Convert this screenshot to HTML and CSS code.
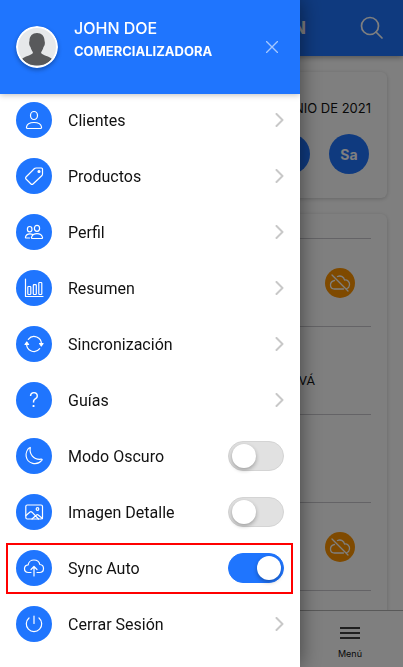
FILE: index.html
```html
<!DOCTYPE html>
<html lang="es">
<head>
<meta charset="utf-8">
<meta name="viewport" content="width=device-width, initial-scale=1">
<title>Menú</title>
<link rel="stylesheet" href="styles.css">
</head>
<body>
<div class="app">
  <header class="navbar">
    <h1 class="navbar-title">N</h1>
    <button class="icon-button" type="button" aria-label="Buscar">
      <svg width="24" height="24" viewBox="0 0 24 24"><circle cx="10" cy="10" r="8.500"/><path d="M16 16l6 6"/></svg>
    </button>
  </header>
  <main class="content">
    <section class="card calendar">
      <p class="month">JUNIO DE 2021</p>
      <div class="days"><button class="day" type="button" aria-label="Viernes"></button><button class="day" type="button">Sa</button></div>
    </section>
    <section class="card visits">
      <div class="visit visit-first"></div>
      <div class="visit"><span class="badge"><svg width="30" height="30" viewBox="0 0 30 30"><path d="M9.500 12.500C7 13 5.500 14.500 5.500 17C5.500 19.500 7.200 21 9.500 21H18.500M12.500 8.500C16 7 19 9.200 19.500 12C22.500 11.700 25 14 24.500 17C24.300 18.700 23.300 20 22 20.500M7 7l16 16"/></svg></span></div>
      <div class="visit"><p class="place">VÁ</p></div>
      <div class="visit"></div>
      <div class="visit"><span class="badge"><svg width="30" height="30" viewBox="0 0 30 30"><path d="M9.500 12.500C7 13 5.500 14.500 5.500 17C5.500 19.500 7.200 21 9.500 21H18.500M12.500 8.500C16 7 19 9.200 19.500 12C22.500 11.700 25 14 24.500 17C24.300 18.700 23.300 20 22 20.500M7 7l16 16"/></svg></span></div>
    </section>
  </main>
  <nav class="tabbar">
    <button class="tab" type="button">
      <svg width="20" height="14" viewBox="0 0 20 14"><path d="M0 2h20M0 7h20M0 12h20"/></svg>
      <span>Menú</span>
    </button>
  </nav>
</div>
<div class="backdrop"></div>
<aside class="drawer">
  <header class="profile">
    <svg class="avatar" width="42" height="42" viewBox="0 0 42 42">
      <circle cx="21" cy="21" r="20" fill="#e6e8ea"/>
      <path fill="#58595b" d="M21 7C25.500 7 28.500 10 28.500 14.500C29.500 17.500 28.500 20 27.500 21C27 23.500 25.500 25 25 27C28 30 33 30 36 33C32 37.500 27 39.500 21 39.500S10 37.500 6 33C9 30 14 30 17 27C16.500 25 15 23.500 14.500 21C13.500 20 12.500 17.500 13.500 14.500C13.500 10 16.500 7 21 7Z"/>
      <circle cx="21" cy="21" r="20" fill="none" stroke="#fff" stroke-width="2"/>
    </svg>
    <div class="identity">
      <p class="name">JOHN DOE</p>
      <p class="company">COMERCIALIZADORA</p>
    </div>
    <button class="close" type="button" aria-label="Cerrar menú"><svg width="12" height="12" viewBox="0 0 12 12"><path d="M0.500 0.500l11 11M11.500 0.500l-11 11"/></svg></button>
  </header>
  <ul class="menu">
    <li><a class="row" href="#clientes">
      <svg class="icon" width="36" height="36" viewBox="0 0 36 36"><ellipse cx="18" cy="13.500" rx="3.500" ry="4"/><path d="M12 26.500C10.800 26.500 10.300 26 10.500 25C11 22 14 20.500 18 20.500S25 22 25.500 25C25.700 26 25.200 26.500 24 26.500Z"/></svg>
      <span class="label">Clientes</span><svg class="chevron" width="9" height="14" viewBox="0 0 9 14"><path d="M1.500 1l6 6-6 6"/></svg></a></li>
    <li><a class="row" href="#productos">
      <svg class="icon" width="36" height="36" viewBox="0 0 36 36"><path d="M10 19L18.500 10.500C19 10 19.500 10 20 10H25.500Q26.500 10 26.500 11V16C26.500 16.700 26.300 17 26 17.500L17 26Q16 27 15 26L10 21Q9 20 10 19Z"/><circle cx="23" cy="13.500" r="1" fill="#fff"/></svg>
      <span class="label">Productos</span><svg class="chevron" width="9" height="14" viewBox="0 0 9 14"><path d="M1.500 1l6 6-6 6"/></svg></a></li>
    <li><a class="row" href="#perfil">
      <svg class="icon" width="36" height="36" viewBox="0 0 36 36"><ellipse cx="21" cy="14.300" rx="2.600" ry="3"/><ellipse cx="13.700" cy="15.200" rx="2.300" ry="2.700"/><path d="M16.500 24.500Q15.200 24.500 15.500 23.300C16.200 21 18.200 19.600 21 19.600S25.800 21 26.500 23.300Q26.800 24.500 25.500 24.500ZM16.500 20.300C13 19.500 10.200 20.600 9.500 23Q9.200 24 10.200 24H13.500"/></svg>
      <span class="label">Perfil</span><svg class="chevron" width="9" height="14" viewBox="0 0 9 14"><path d="M1.500 1l6 6-6 6"/></svg></a></li>
    <li><a class="row" href="#resumen">
      <svg class="icon" width="36" height="36" viewBox="0 0 36 36"><path d="M9.500 9V26.500H27"/><rect x="11.800" y="16.500" width="3" height="8" rx=".7"/><rect x="17.300" y="14.700" width="3" height="9.800" rx=".7"/><rect x="22.800" y="12.500" width="3" height="12" rx=".7"/></svg>
      <span class="label">Resumen</span><svg class="chevron" width="9" height="14" viewBox="0 0 9 14"><path d="M1.500 1l6 6-6 6"/></svg></a></li>
    <li><a class="row" href="#sincronizacion">
      <svg class="icon" width="36" height="36" viewBox="0 0 36 36"><path d="M12.300 13.300A7.300 7.300 0 0 1 25.300 18.500M23.700 22.700A7.300 7.300 0 0 1 10.700 17.500"/><path d="M9 18.500l1.800-2.500 1.800 2.500zM23.500 17.500h3.600l-1.800 2.500z" fill="#fff"/></svg>
      <span class="label">Sincronización</span><svg class="chevron" width="9" height="14" viewBox="0 0 9 14"><path d="M1.500 1l6 6-6 6"/></svg></a></li>
    <li><a class="row" href="#guias">
      <span class="icon icon-help" aria-hidden="true">?</span>
      <span class="label">Guías</span><svg class="chevron" width="9" height="14" viewBox="0 0 9 14"><path d="M1.500 1l6 6-6 6"/></svg></a></li>
    <li><label class="row">
      <svg class="icon" width="36" height="36" viewBox="0 0 36 36"><path d="M14.300 9.700C13 16 17.500 22 25 21.200Q26.800 21 25.800 22.300C21 28 11.500 26 10.200 18.500C9.600 15 11.300 11.300 13.500 9.800Q14.400 9.200 14.300 9.700Z"/></svg>
      <span class="label">Modo Oscuro</span><input class="toggle" type="checkbox" role="switch"></label></li>
    <li><label class="row">
      <svg class="icon" width="36" height="36" viewBox="0 0 36 36"><rect x="9.800" y="11" width="16.700" height="14" rx="1.500"/><circle cx="21.500" cy="15" r="1.300"/><path d="M10 21.500l4-3.500Q15 17.300 16 18.200L22.500 25M16 25l4.500-4Q21.300 20.300 22.200 21L26.500 24.500"/></svg>
      <span class="label">Imagen Detalle</span><input class="toggle" type="checkbox" role="switch"></label></li>
    <li><label class="row highlighted">
      <svg class="icon" width="36" height="36" viewBox="0 0 36 36"><path d="M15 22.500H12.500C10 22.500 8.500 21 8.500 18.800C8.500 16.500 10 15 12.200 14.800C12.500 12 15 10 18 10C20.800 10 23.300 11.900 23.800 14.500C26 14.700 27.500 16.300 27.500 18.500C27.500 20.800 26 22.500 23.500 22.500H21M18 26V17M15 19.500l3-3 3 3"/></svg>
      <span class="label">Sync Auto</span><input class="toggle" type="checkbox" role="switch" checked></label></li>
    <li><a class="row" href="#salir">
      <svg class="icon" width="36" height="36" viewBox="0 0 36 36"><path d="M18 10V17.500M13 12A7.700 7.700 0 1 0 23 12"/></svg>
      <span class="label">Cerrar Sesión</span><svg class="chevron" width="9" height="14" viewBox="0 0 9 14"><path d="M1.500 1l6 6-6 6"/></svg></a></li>
  </ul>
</aside>
</body>
</html>
```
FILE: styles.css
```css
:root {
  --blue: #1f75fe;
  --line: #c8c7cc;
}

* { box-sizing: border-box; }

body, p, h1, ul {
  margin: 0;
  padding: 0;
}

body {
  font-family: Inter, "Liberation Sans", sans-serif;
  font-size: 16px;
  color: #111;
}

button {
  border: 0;
  padding: 0;
  background: none;
  font: inherit;
  color: inherit;
}

svg {
  display: block;
  flex: none;
  fill: none;
  stroke-linecap: round;
  stroke-linejoin: round;
}

.app {
  height: 100vh;
  display: flex;
  flex-direction: column;
  overflow: hidden;
  background: #fff;
}

.navbar {
  position: relative;
  flex: none;
  height: 56px;
  padding: 0 19px;
  display: flex;
  align-items: center;
  justify-content: flex-end;
  gap: 54px;
  background: var(--blue);
  color: #fff;
  box-shadow: 0 1px 6px rgba(0, 0, 0, .4);
}

.navbar-title {
  font-size: 17px;
  font-weight: 700;
}

.icon-button svg {
  stroke: #fff;
  stroke-width: 1.7;
}

.content {
  flex: 1;
  min-height: 0;
  overflow: hidden;
  padding: 16px;
  display: flex;
  flex-direction: column;
  gap: 16px;
}

.card {
  flex: none;
  padding: 0 16px;
  border-radius: 6px;
  box-shadow: 0 1px 4px rgba(0, 0, 0, .2);
}

.calendar {
  padding: 26px 16px 24px;
  text-align: right;
}

.month {
  font-size: 13px;
  line-height: 20px;
}

.days {
  display: flex;
  justify-content: flex-end;
  gap: 19px;
  padding: 16px 2px 0 0;
}

.day {
  width: 40px;
  height: 40px;
  border-radius: 50%;
  background: var(--blue);
  color: #fff;
  font-size: 14px;
  font-weight: 700;
}

.visits { padding-bottom: 32px; }

.visit {
  height: 88px;
  display: flex;
  align-items: center;
  justify-content: flex-end;
  padding-right: 16px;
  border-bottom: 1px solid var(--line);
}

.visit-first { height: 25px; }

.badge svg {
  border-radius: 50%;
  background: #ff9500;
  stroke: #fff;
  stroke-width: 1.3;
}

.place {
  padding: 20px 40px 0 0;
  font-family: Roboto, sans-serif;
  font-size: 13px;
}

.tabbar {
  flex: none;
  height: 57px;
  padding: 8px 16px 0;
  display: flex;
  justify-content: flex-end;
  border-top: 1px solid #b2b2b2;
  background: #fff;
}

.tab {
  width: 74px;
  display: flex;
  flex-direction: column;
  align-items: center;
  justify-content: center;
  gap: 8px;
  font-size: 9px;
  line-height: 12px;
}

.tab svg {
  stroke: #000;
  stroke-width: 1.5;
  stroke-linecap: butt;
}

.backdrop {
  position: fixed;
  inset: 0;
  background: rgba(0, 0, 0, .5);
}

.drawer {
  position: fixed;
  inset: 0 auto 0 0;
  width: 300px;
  max-width: 100%;
  overflow: hidden auto;
  background: #fff;
  box-shadow: 0 0 20px rgba(0, 0, 0, .5);
}

.profile {
  position: relative;
  height: 94px;
  padding: 0 22px 0 16px;
  display: flex;
  align-items: center;
  gap: 16px;
  background: var(--blue);
  color: #fff;
  box-shadow: 0 1px 6px rgba(0, 0, 0, .25);
}

.avatar {
  border-radius: 50%;
  box-shadow: 0 2px 4px rgba(0, 0, 0, .3);
}

.identity {
  flex: 1;
  padding-bottom: 16px;
}

.name {
  font-size: 16px;
  font-weight: 500;
  line-height: 24px;
}

.company {
  font-size: 13px;
  font-weight: 700;
  line-height: 22px;
}

.close svg {
  stroke: #a5c8ff;
  stroke-width: 1.4;
}

.menu {
  margin-top: -2px;
  list-style: none;
}

.row {
  position: relative;
  height: 56px;
  padding: 0 16px;
  display: flex;
  align-items: center;
  gap: 16px;
  color: inherit;
  text-decoration: none;
}

.icon {
  width: 36px;
  height: 36px;
  border-radius: 50%;
  background: var(--blue);
  stroke: #fff;
  stroke-width: 1.2;
}

.icon-help {
  flex: none;
  color: #fff;
  font-size: 20px;
  font-weight: 300;
  line-height: 36px;
  text-align: center;
}

.label {
  flex: 1;
  font-family: Roboto, sans-serif;
}

.chevron {
  stroke: #c8c8c8;
  stroke-width: 2;
}

.toggle {
  appearance: none;
  flex: none;
  width: 56px;
  height: 30px;
  margin: 0;
  padding: 2px 3px;
  display: flex;
  border: 1px solid #d4d4d4;
  border-radius: 15px;
  background: #e1e1e1;
}

.toggle::before {
  content: "";
  width: 24px;
  height: 24px;
  border-radius: 50%;
  background: #fff;
  box-shadow: 0 2px 4px rgba(0, 0, 0, .3);
}

.toggle:checked {
  justify-content: flex-end;
  padding: 2px;
  border-color: var(--blue);
  background: var(--blue);
}

.highlighted::after {
  content: "";
  position: absolute;
  inset: 3px 7px 2px 6px;
  border: 2px solid #f00;
}
```
